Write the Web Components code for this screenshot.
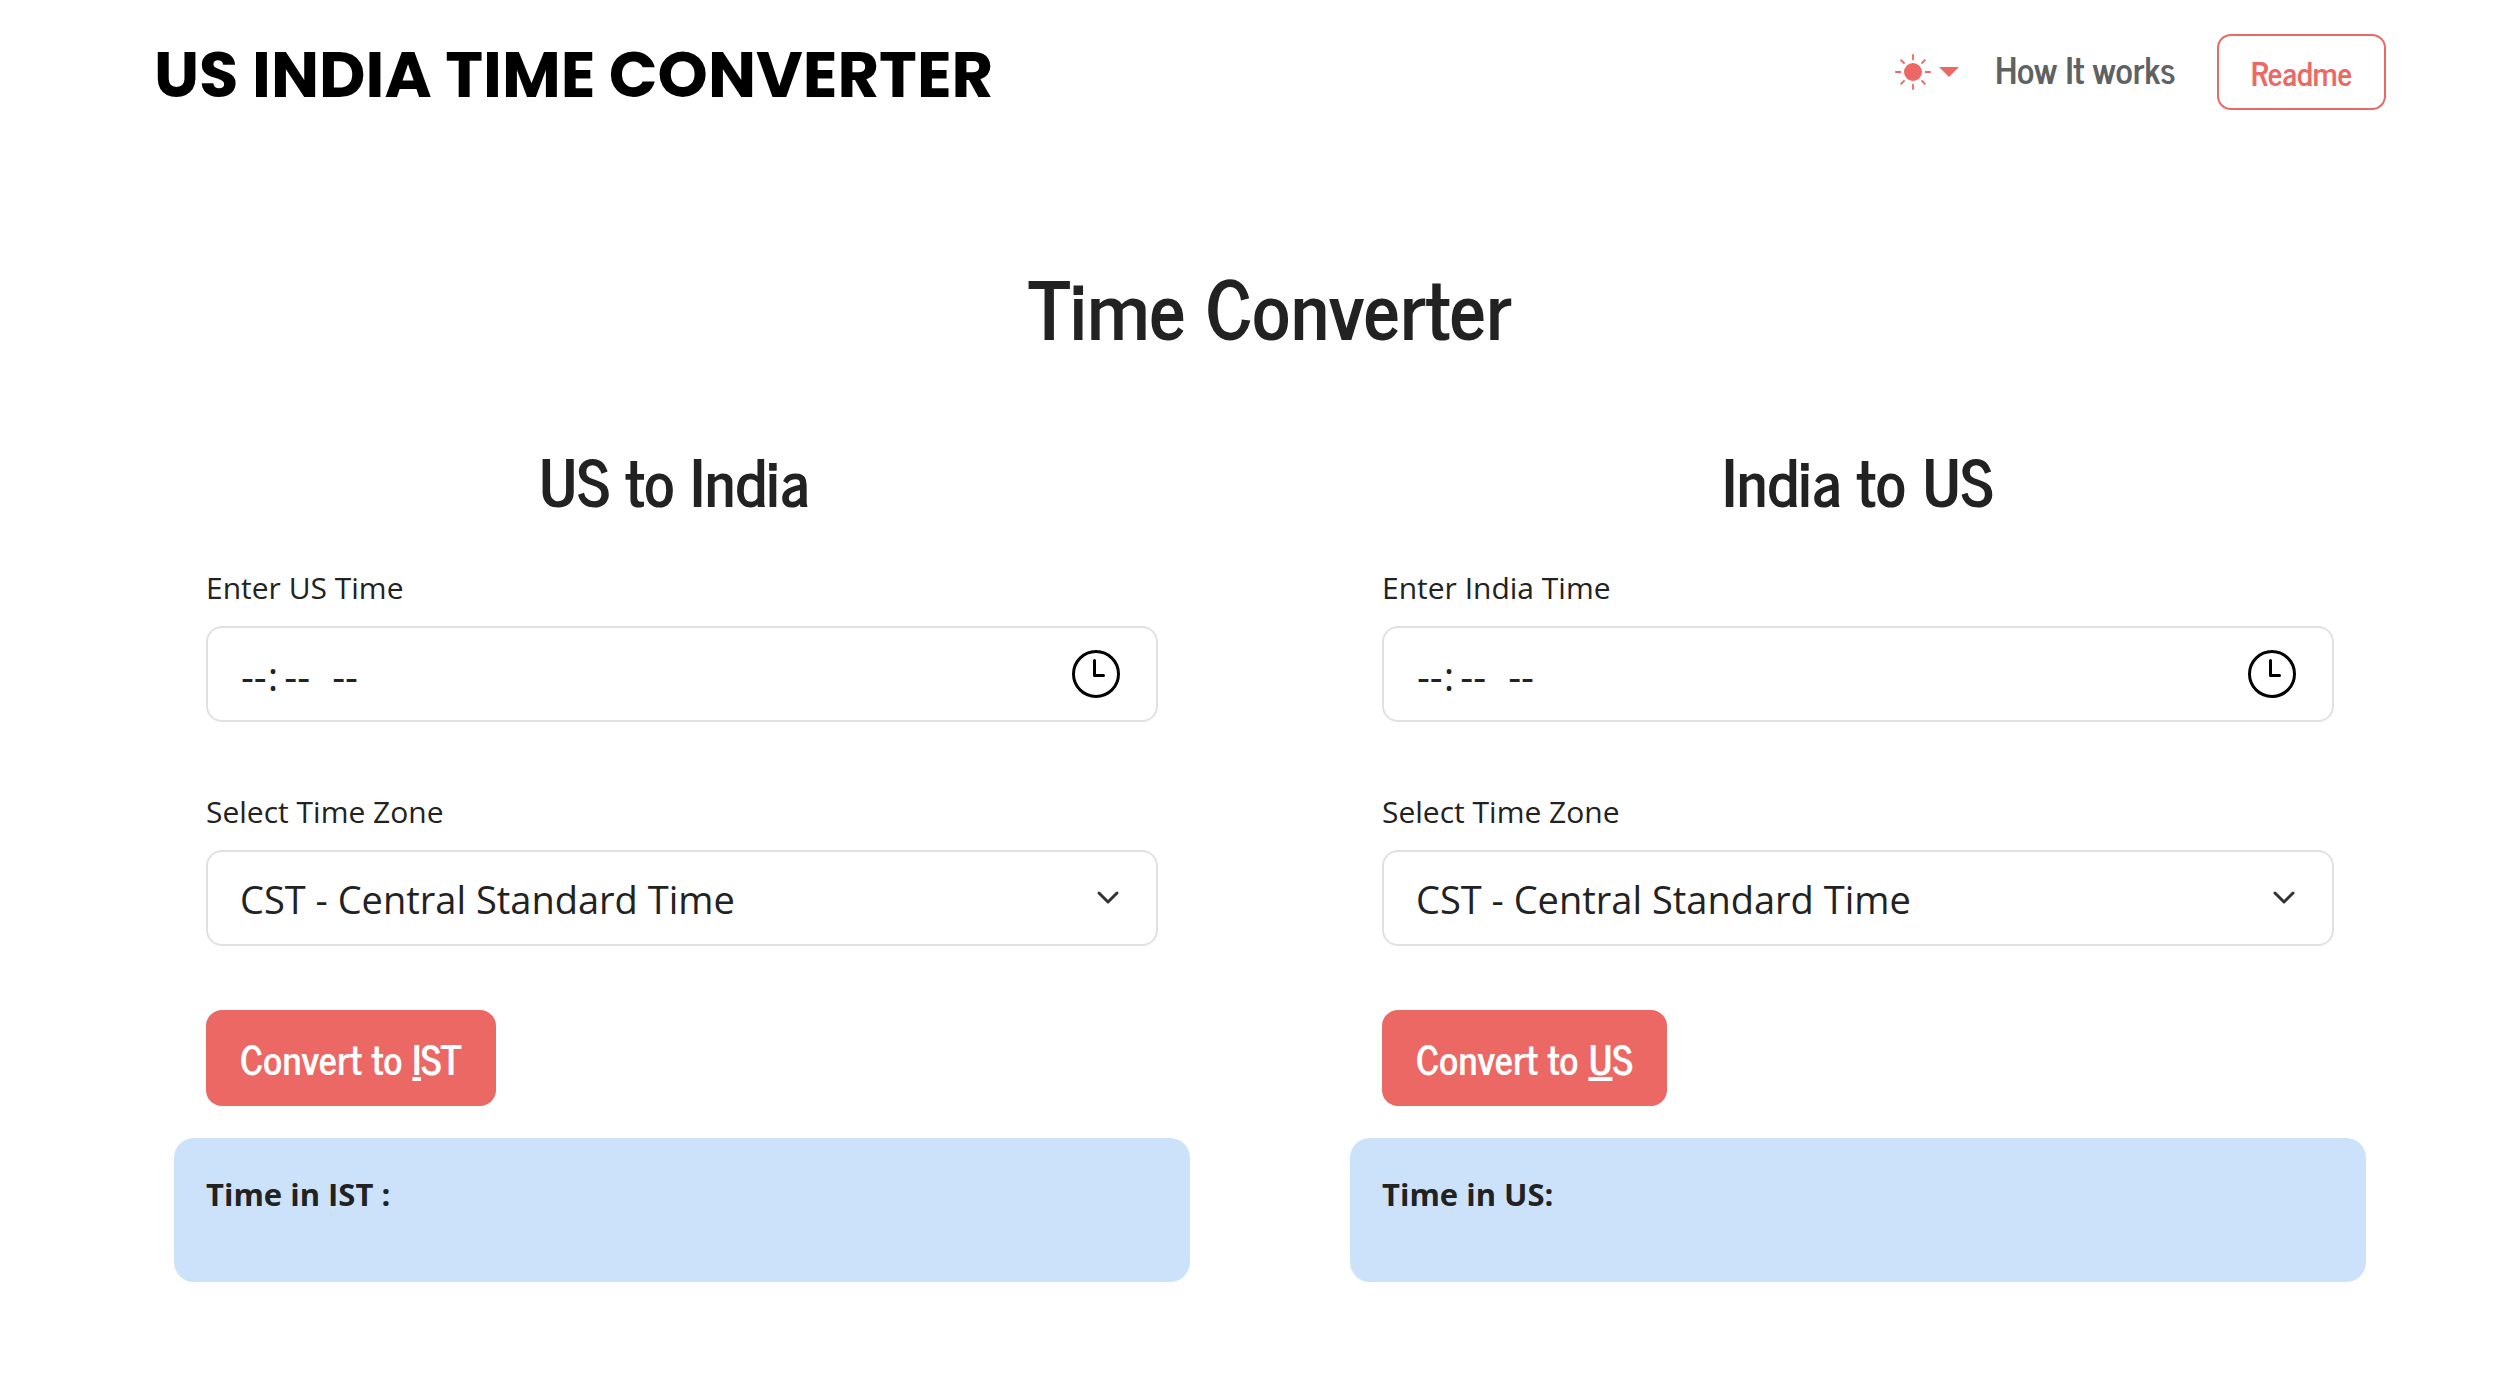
<!DOCTYPE html>
<html lang="en">
<head>
<meta charset="utf-8">
<meta name="viewport" content="width=device-width, initial-scale=1">
<title>US India Time Converter</title>
<style>
  :root {
    --primary: #eb6864;
    --ink: #222;
    --border: #dee2e2;
    --result: #cbe2fa;
    --heading-font: "News Cycle", "Liberation Sans Narrow", "Arial Narrow", sans-serif;
    --body-font: "Segoe UI", "Open Sans", "Noto Sans", sans-serif;
    --brand-font: Poppins, Inter, sans-serif;
  }
  body {
    margin: 0;
    background: #fff;
    color: var(--ink);
    font: 30px/48px var(--body-font);
  }
</style>
</head>
<body>
<converter-app></converter-app>

<script>
  const define = (name, html, setup) => {
    const template = document.createElement('template');
    template.innerHTML = html;
    customElements.define(name, class extends HTMLElement {
      constructor() {
        super();
        this.attachShadow({ mode: 'open' }).append(template.content.cloneNode(true));
      }
      connectedCallback() {
        if (setup) setup(this, this.shadowRoot);
      }
    });
  };

  define('site-header', `
    <style>
      :host { display: block; }
      header { display: flex; align-items: center; justify-content: space-between; padding: 34px 0 0; height: 76px; }
      .brand { font: 700 64px/76px var(--brand-font); color: #000; text-decoration: none; padding-top: 6px; }
      nav { display: flex; align-items: center; gap: 36px; font-family: var(--heading-font); }
      .theme { display: flex; align-items: center; gap: 8px; padding: 0; border: 0; background: none; color: var(--primary); }
      .theme svg { display: block; }
      .link { font-size: 36px; font-weight: 700; line-height: 72px; color: #606262; text-decoration: none; padding-bottom: 6px; }
      .readme { font: 700 32px/48px var(--heading-font); color: var(--primary); text-decoration: none;
        box-sizing: border-box; border: 2px solid; border-radius: 14px; padding: 12px 32px; margin-left: 5px; }
    </style>
    <header>
      <a class="brand" href="#">US INDIA TIME CONVERTER</a>
      <nav>
        <button class="theme" type="button" aria-label="Toggle theme">
          <svg width="36" height="36" viewBox="0 0 16 16" fill="currentColor">
            <circle cx="8" cy="8" r="4"/>
            <g stroke="currentColor" stroke-width=".8" stroke-linecap="round">
              <path d="M8 .4v2M8 13.600v2M.4 8h2M13.600 8h2M2.700 2.700l1.300 1.300M12 12l1.300 1.300M13.300 2.700l-1.300 1.300M4 12l-1.300 1.300"/>
            </g>
          </svg>
          <svg width="20" height="10" viewBox="0 0 20 10" fill="currentColor"><path d="M0 0h20L10 10z"/></svg>
        </button>
        <a class="link" href="#">How It works</a>
        <a class="readme" href="#">Readme</a>
      </nav>
    </header>`);

  define('time-field', `
    <style>
      :host { display: block; }
      label { display: block; padding-top: 2px; margin-bottom: 14px; }
      input {
        display: block; box-sizing: border-box; width: 100%; height: 96px; margin: 0; padding: 4px 36px 0 32px;
        border: 2px solid var(--border); border-radius: 16px; background: #fff;
        color: var(--ink); font: 40px/60px var(--body-font);
      }
      input::-webkit-datetime-edit-minute-field { padding-left: 6px; }
      input::-webkit-datetime-edit-ampm-field { padding-left: 16px; }
      input::-webkit-calendar-picker-indicator {
        width: 48px; height: 48px; padding: 0 0 4px; opacity: 1;
        background: url("data:image/svg+xml,%3Csvg xmlns='http://www.w3.org/2000/svg' viewBox='0 0 48 48' fill='none' stroke='%23000' stroke-width='3' stroke-linecap='round' stroke-linejoin='round'%3E%3Ccircle cx='24' cy='24' r='22.500'/%3E%3Cpath d='M22.500 10.500v15h9'/%3E%3C/svg%3E") center top / 48px 48px no-repeat;
      }
    </style>
    <label for="time"></label>
    <input id="time" type="time">`, (host, root) => {
      root.querySelector('label').textContent = host.getAttribute('label');
    });

  define('zone-field', `
    <style>
      :host { display: block; }
      label { display: block; padding-top: 2px; margin-bottom: 14px; }
      select {
        display: block; box-sizing: border-box; width: 100%; height: 96px; margin: 0; padding: 2px 96px 0 32px;
        appearance: none; border: 2px solid var(--border); border-radius: 16px;
        color: var(--ink); font: 38px/60px var(--body-font);
        background: #fff url("data:image/svg+xml,%3Csvg xmlns='http://www.w3.org/2000/svg' viewBox='0 0 24 16' fill='none' stroke='%23333' stroke-width='3' stroke-linecap='round' stroke-linejoin='round'%3E%3Cpath d='M3 3l9 9 9-9'/%3E%3C/svg%3E") right 36px center / 24px 16px no-repeat;
      }
    </style>
    <label for="zone">Select Time Zone</label>
    <select id="zone">
      <option>CST - Central Standard Time</option>
      <option>EST - Eastern Standard Time</option>
      <option>MST - Mountain Standard Time</option>
      <option>PST - Pacific Standard Time</option>
    </select>`);

  define('convert-button', `
    <style>
      :host { display: block; }
      button {
        display: block; box-sizing: border-box; height: 96px; margin: 0; padding: 0 34px; border: 0; border-radius: 16px;
        background: var(--primary); color: #fff; font: 700 40px/60px var(--heading-font);
      }
      ::slotted(u) { text-underline-offset: 2px; text-decoration-thickness: 4px; }
    </style>
    <button type="button"><slot></slot></button>`);

  define('result-panel', `
    <style>
      :host { display: block; }
      output { display: block; padding: 32px 32px 64px; border-radius: 20px; background: var(--result); font-size: 31px; font-weight: 700; }
    </style>
    <output><slot></slot></output>`);

  define('converter-card', `
    <style>
      :host { display: block; flex: 1; min-width: 0; }
      h2 { margin: 0 0 42px; font: 700 64px/80px var(--heading-font); text-align: center; }
      form { display: flex; flex-direction: column; gap: 64px; padding: 0 32px 32px; }
    </style>
    <h2><slot name="title"></slot></h2>
    <form>
      <slot name="time"></slot>
      <slot name="zone"></slot>
      <slot name="action"></slot>
    </form>
    <slot name="result"></slot>`);

  define('converter-app', `
    <style>
      :host { display: block; padding: 0 126px 90px 154px; }
      h1 { margin: 143px 0 83px; font: 700 80px/104px var(--heading-font); text-align: center; }
      main { display: block; }
      .columns { display: flex; gap: 160px; padding: 0 20px; }
    </style>
    <site-header></site-header>
    <main>
      <h1>Time Converter</h1>
      <div class="columns">
        <converter-card>
          <span slot="title">US to India&nbsp;</span>
          <time-field slot="time" label="Enter US Time"></time-field>
          <zone-field slot="zone"></zone-field>
          <convert-button slot="action">Convert to <u>I</u>ST</convert-button>
          <result-panel slot="result">Time in IST :</result-panel>
        </converter-card>
        <converter-card>
          <span slot="title">India to US</span>
          <time-field slot="time" label="Enter India Time"></time-field>
          <zone-field slot="zone"></zone-field>
          <convert-button slot="action">Convert to <u>U</u>S</convert-button>
          <result-panel slot="result">Time in US:</result-panel>
        </converter-card>
      </div>
    </main>`);
</script>
</body>
</html>
